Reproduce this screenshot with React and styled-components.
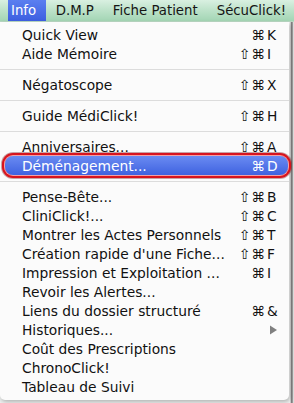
import React from "react";
import styled, { createGlobalStyle } from "styled-components";

const Global = createGlobalStyle`
  html, body { margin: 0; padding: 0; }
  body {
    width: 294px;
    height: 403px;
    overflow: hidden;
    background: #e9ecea;
    font-family: "DejaVu Sans", "Liberation Sans", sans-serif;
  }
`;

const Page = styled.div`
  width: 294px;
  height: 403px;
  display: flex;
  flex-direction: column;
  background: linear-gradient(to right, #eef0ef 0, #eef0ef 289px, #f4f4f4 290px, #5a5a5a 292px, #dcdcdc 293px);
`;

const MenuBar = styled.div`
  height: 21px;
  display: flex;
  align-items: stretch;
  padding-left: 8px;
  background: linear-gradient(to bottom, #d9f0e1 0%, #bfe3cb 45%, #a3d5b4 100%);
  border-bottom: 1px solid #b9d8c3;
  flex-shrink: 0;
  overflow: hidden;
`;

const BarItem = styled.div`
  display: flex;
  align-items: center;
  padding: ${(p) => (p.$first ? "0 10px 0 3px" : "0 9.5px")};
  font-size: 13.3px;
  color: ${(p) => (p.$active ? "#ffffff" : "#151515")};
  background: ${(p) =>
    p.$active ? "linear-gradient(to bottom, #5b7ff0, #3d5fe0)" : "transparent"};
  white-space: nowrap;
`;

const Panel = styled.div`
  width: 289px;
  flex: 1;
  box-sizing: border-box;
  padding: 3px 0 4px;
  background: #fbfbfb;
  border-radius: 0 0 5px 5px;
  box-shadow: 1px 2px 4px rgba(0, 0, 0, 0.25);
  margin-bottom: 3px;
`;

const Row = styled.div`
  height: 19px;
  display: flex;
  align-items: center;
  box-sizing: border-box;
  padding: ${(p) => (p.$active ? "0 7px 0 17px" : "0 8px 0 22px")};
  margin: ${(p) => (p.$active ? "0 1px 0 5px" : "0")};
  font-size: 13.8px;
  color: ${(p) => (p.$active ? "#ffffff" : "#111111")};
  background: ${(p) =>
    p.$active ? "linear-gradient(to bottom, #6a8bf2, #3f62e0)" : "transparent"};
  border-radius: ${(p) => (p.$active ? "8px" : "0")};
  box-shadow: ${(p) =>
    p.$active
      ? "0 0 0 1px #f3a0a4, 0 0 0 3px #d8141e, 0 0 0 4px rgba(110,0,0,0.35)"
      : "none"};
  white-space: nowrap;
`;

const Label = styled.span`
  flex: 1;
`;

const Shortcut = styled.span`
  display: flex;
`;

const Mods = styled.span`
  text-align: right;
  letter-spacing: 1px;
`;

const Key = styled.span`
  width: 14px;
  padding-left: 1px;
`;

const Separator = styled.div`
  height: 12px;
  display: flex;
  align-items: center;
  &::after {
    content: "";
    flex: 1;
    height: 1px;
    background: #dcdcdc;
  }
`;

const Arrow = styled.svg`
  width: 14px;
  height: 10px;
  display: block;
`;

const items = [
  { label: "Quick View", mods: "⌘", key: "K" },
  { label: "Aide Mémoire", mods: "⇧⌘", key: "I" },
  { sep: true },
  { label: "Négatoscope", mods: "⇧⌘", key: "X" },
  { sep: true },
  { label: "Guide MédiClick!", mods: "⇧⌘", key: "H" },
  { sep: true },
  { label: "Anniversaires...", mods: "⇧⌘", key: "A" },
  { label: "Déménagement...", mods: "⌘", key: "D", active: true },
  { sep: true },
  { label: "Pense-Bête...", mods: "⇧⌘", key: "B" },
  { label: "CliniClick!...", mods: "⇧⌘", key: "C" },
  { label: "Montrer les Actes Personnels", mods: "⇧⌘", key: "T" },
  { label: "Création rapide d'une Fiche...", mods: "⇧⌘", key: "F" },
  { label: "Impression et Exploitation ...", mods: "⌘", key: "I" },
  { label: "Revoir les Alertes..." },
  { label: "Liens du dossier structuré", mods: "⌘", key: "&" },
  { label: "Historiques...", submenu: true },
  { label: "Coût des Prescriptions" },
  { label: "ChronoClick!" },
  { label: "Tableau de Suivi" },
];

export default function App() {
  return (
    <>
      <Global />
      <Page>
        <MenuBar>
          <BarItem $active $first>Info</BarItem>
          <BarItem>D.M.P</BarItem>
          <BarItem>Fiche Patient</BarItem>
          <BarItem>SécuClick!</BarItem>
        </MenuBar>
        <Panel>
          {items.map((it, i) =>
            it.sep ? (
              <Separator key={i} />
            ) : (
              <Row key={i} $active={it.active}>
                <Label>{it.label}</Label>
                {it.key && (
                  <Shortcut>
                    <Mods>{it.mods}</Mods>
                    <Key>{it.key}</Key>
                  </Shortcut>
                )}
                {it.submenu && (
                  <Arrow viewBox="0 0 14 10">
                    <path d="M3 0.5 L10 5 L3 9.5 Z" fill="#808080" />
                  </Arrow>
                )}
              </Row>
            )
          )}
        </Panel>
      </Page>
    </>
  );
}
